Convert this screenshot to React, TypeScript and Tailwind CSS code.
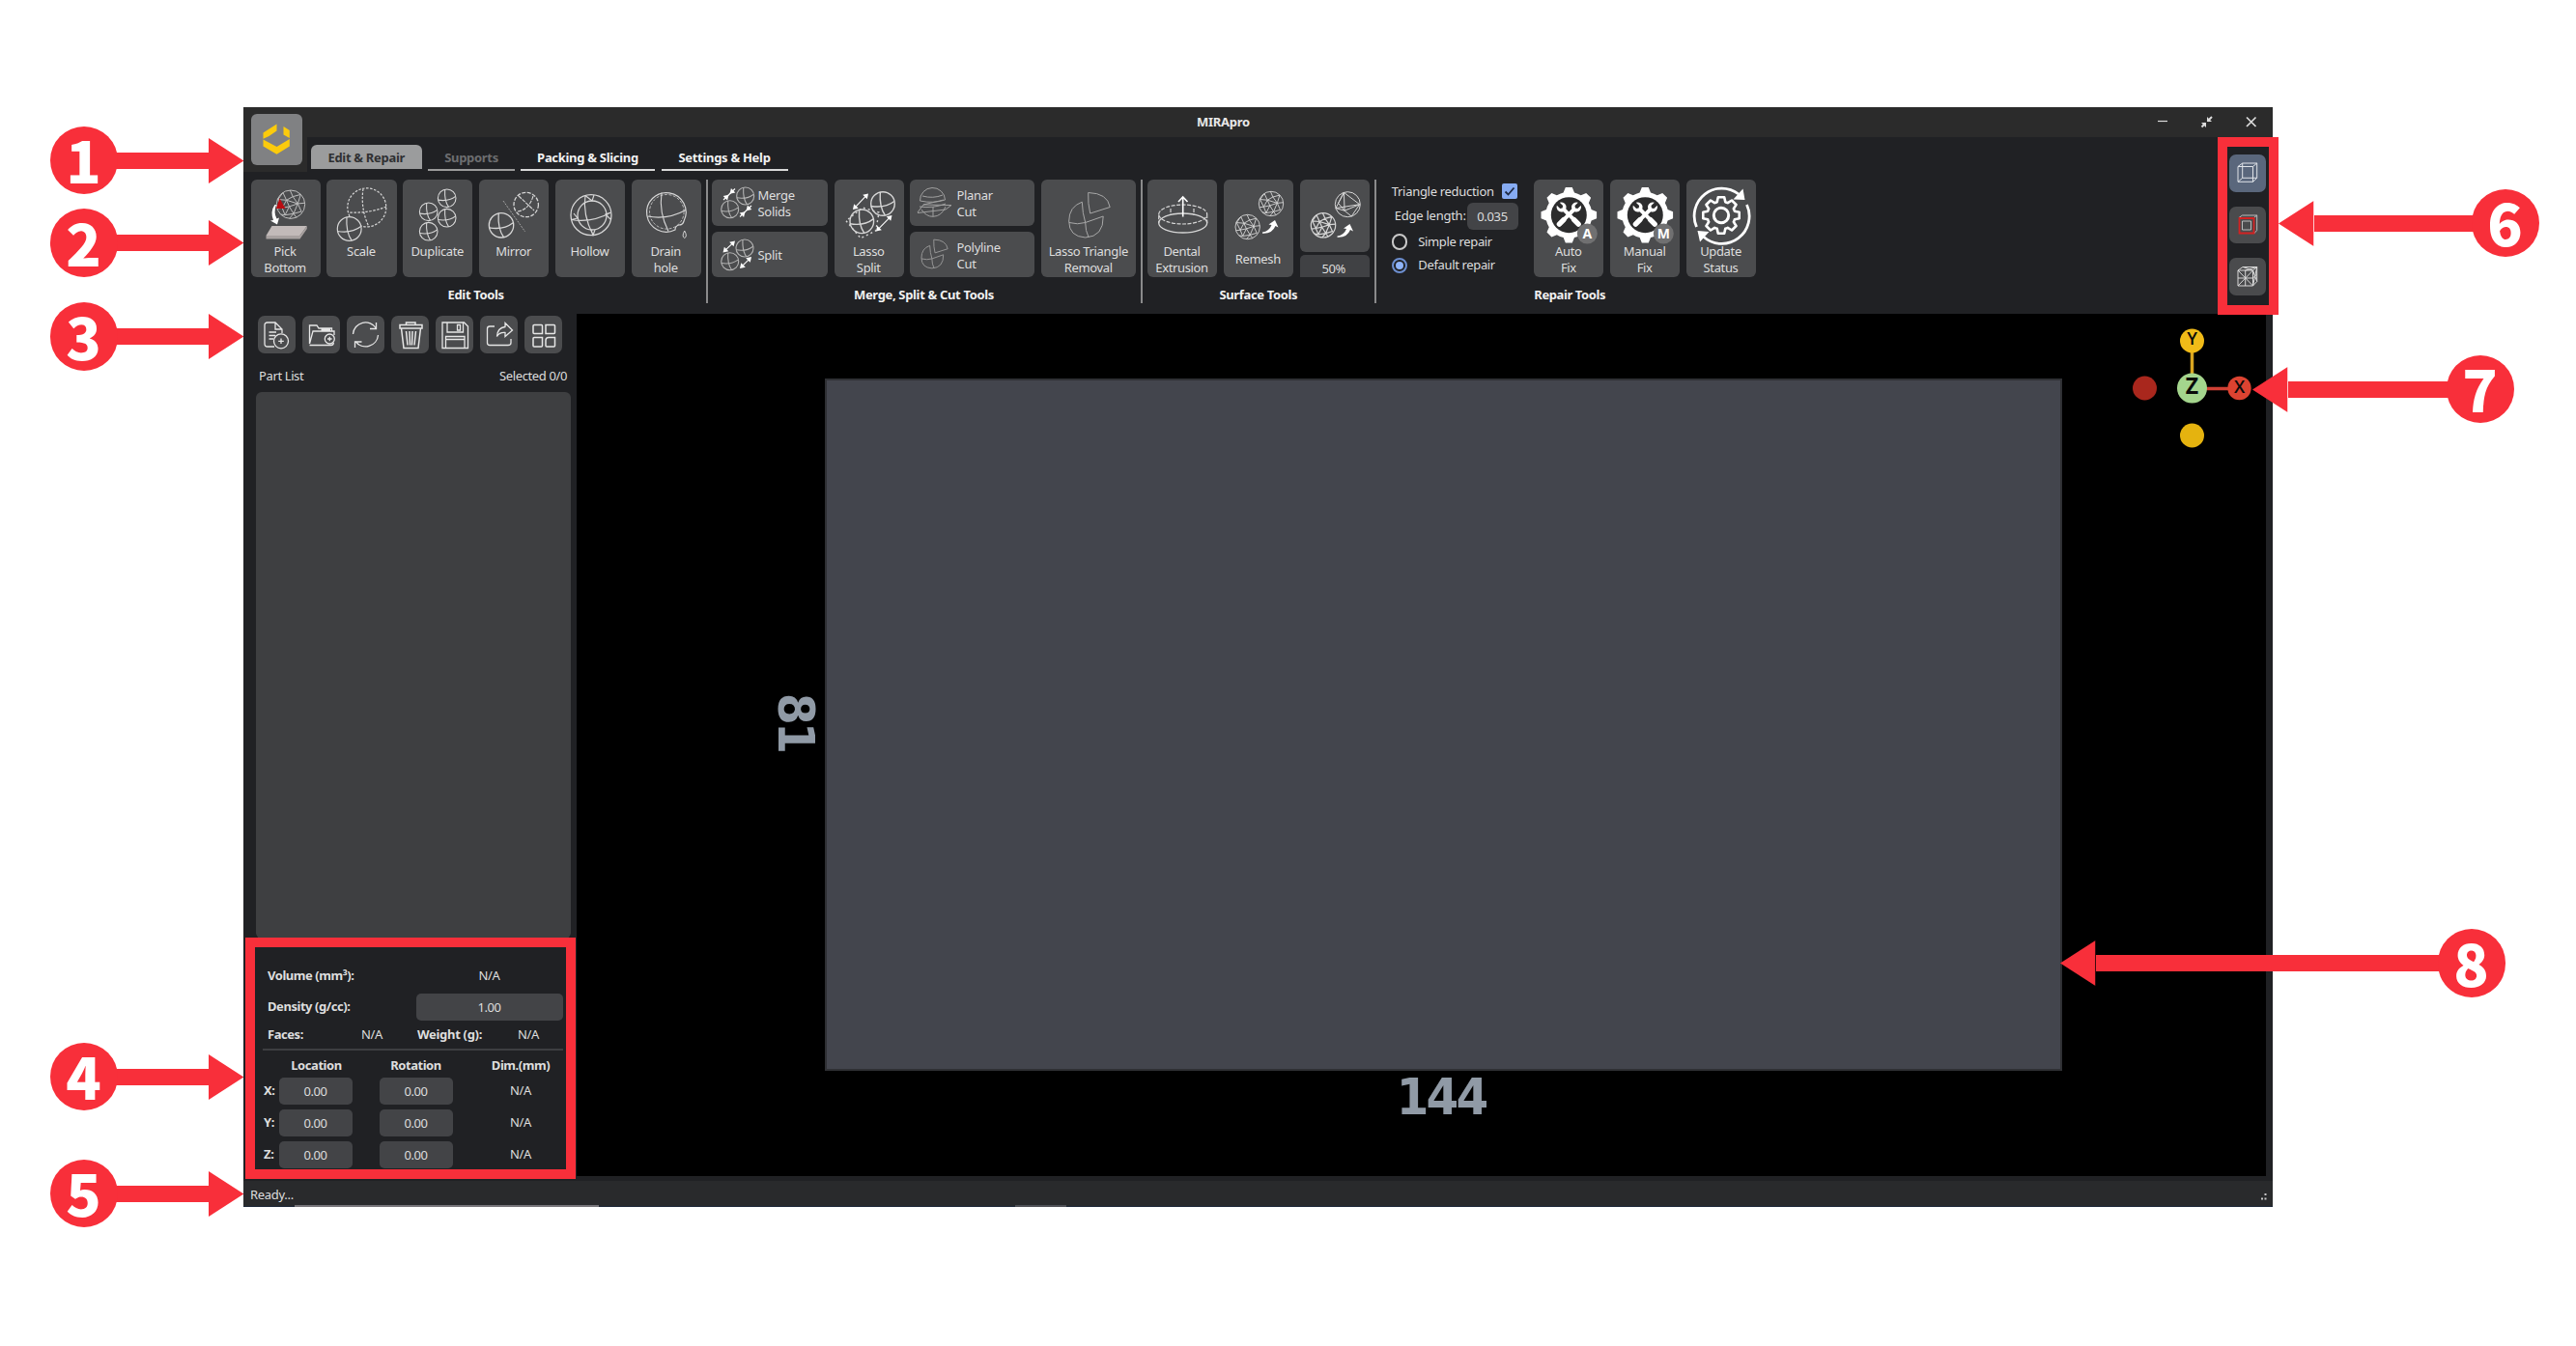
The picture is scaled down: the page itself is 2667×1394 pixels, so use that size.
import React from 'react';

const icon = 'fill-none stroke-[#d6d6d6]';

function Sphere({ x, y, r, w = 1.1 }: { x: number; y: number; r: number; w?: number }) {
  return (
    <g transform={`translate(${x} ${y}) scale(${r})`} strokeWidth={w / r}>
      <circle r="1" />
      <path d="M-1 .2Q.2 .4 .96 -.2" />
      <path d="M-.22 -.98Q-.3 .3 .2 .98" />
    </g>
  );
}

function Mesh({ x, y, r, w = 0.9, coarse = false }: { x: number; y: number; r: number; w?: number; coarse?: boolean }) {
  return (
    <g transform={`translate(${x} ${y}) scale(${r})`} strokeWidth={w / r} strokeLinejoin="round">
      <circle r="1" />
      {coarse ? (
        <path d="M-.3 -.95L-.25 .5L.95 0L-.3 -.95L-.95 .3L-.25 .5L.3 .95M-.95 .3L.95 0M.95 0L.3 .95M-.3 -.95L-.75 -.1L-.25 .5" />
      ) : (
        <path d="M-.55 -.83L-.3 -.3L.15 -.55L-.05 -1M.15 -.55L.7 -.7M.15 -.55L.5 -.05L-.1 .15L-.3 -.3L.5 -.05L1 -.1M.7 -.7L.5 -.05L.75 .5L.2 .65L-.1 .15L-.6 .25L-.3 -.3L-.9 -.35L-.6 .25L-.95 .3M-.6 .25L-.4 .75L-.1 .15M-.4 .75L.2 .65L-.1 1M.5 -.05L.2 .65L.4 .92M-.9 -.35L-.55 -.83M-.4 .75L-.7 .7" />
      )}
    </g>
  );
}

function Double({ a, b, inward = false }: { a: [number, number]; b: [number, number]; inward?: boolean }) {
  const head = (p: [number, number], q: [number, number]) => {
    const t = Math.atan2(p[1] - q[1], p[0] - q[0]);
    return <polygon points="0,0 -5,-3.2 -5,3.2" className="fill-white stroke-none" transform={`translate(${p[0]} ${p[1]}) rotate(${(t * 180) / Math.PI})`} />;
  };
  const m: [number, number] = [(a[0] + b[0]) / 2, (a[1] + b[1]) / 2];
  return (
    <g className="stroke-white" strokeWidth="1.1">
      <path d={inward ? `M${a[0]} ${a[1]}L${b[0]} ${b[1]}` : `M${a[0] * 0.85 + b[0] * 0.15} ${a[1] * 0.85 + b[1] * 0.15}L${b[0] * 0.85 + a[0] * 0.15} ${b[1] * 0.85 + a[1] * 0.15}`} />
      {inward ? head([m[0] - 0.5, m[1] + 0.5], a) : head(a, b)}
      {inward ? head([m[0] + 0.5, m[1] - 0.5], b) : head(b, a)}
    </g>
  );
}

function Swoosh({ x, y }: { x: number; y: number }) {
  return <path transform={`translate(${x} ${y})`} className="fill-white stroke-none" d="M0 11.5Q7 10.5 9.500 4L6.500 3.500L13 -1L16.500 6.500L13.500 5Q10 13.500 0 12.800Z" />;
}

function gearPath(teeth: number, ro: number, ri: number, half: number, halfTop: number) {
  let d = '';
  for (let i = 0; i < teeth; i++) {
    const c = (i / teeth) * Math.PI * 2 - Math.PI / 2;
    const pts = [[ri, c - half], [ro, c - halfTop], [ro, c + halfTop], [ri, c + half]];
    pts.forEach(([r, t], k) => {
      const px = (r * Math.cos(t)).toFixed(2);
      const py = (r * Math.sin(t)).toFixed(2);
      if (i === 0 && k === 0) d += `M${px} ${py}`;
      else if (k === 0) d += `A${ri} ${ri} 0 0 1 ${px} ${py}`;
      else d += `L${px} ${py}`;
    });
  }
  return d + `A${ri} ${ri} 0 0 1 ${(ri * Math.cos(-Math.PI / 2 - half)).toFixed(2)} ${(ri * Math.sin(-Math.PI / 2 - half)).toFixed(2)}Z`;
}

function Wrench({ rotate }: { rotate: number }) {
  return (
    <g transform={`rotate(${rotate})`}>
      <path d="M-2.200 -7L-2.200 8Q-2.200 14.500 0 15.500Q2.200 14.500 2.200 8L2.200 -7Q6 -9 5.500 -13Q5 -16 2.300 -17.300L2.300 -12L0 -10.500L-2.300 -12L-2.300 -17.300Q-5 -16 -5.500 -13Q-6 -9 -2.200 -7Z" className="fill-white stroke-none" />
    </g>
  );
}

function FixIcon({ letter }: { letter: string }) {
  return (
    <>
      <g transform="translate(36.300 36.700)" className="stroke-none">
        <path d={gearPath(8, 29, 24, 0.24, 0.12)} className="fill-white" />
        <circle r="18.500" className="fill-[#2c2c2d]" />
        <g transform="translate(0 -0.500) scale(.9)">
          <Wrench rotate={45} />
          <Wrench rotate={-45} />
          <path d="M6 6L11 11M-6 6L-11 11" className="stroke-white" strokeWidth="6" strokeLinecap="round" />
        </g>
      </g>
      <circle cx="55.300" cy="56" r="10.500" className="fill-[#707071] stroke-none" />
      <text x="55.300" y="61" textAnchor="middle" className="fill-white stroke-none font-['Open_Sans',sans-serif] text-[14px] font-bold">{letter}</text>
    </>
  );
}

const card = 'relative shrink-0 overflow-hidden rounded-[6px] bg-[#4b4c4e]';

function Tool({ lines, children, width = 'w-[72.200px]', labelTop = 'pt-[66px]' }: { lines: string[]; children: React.ReactNode; width?: string; labelTop?: string }) {
  return (
    <div className={`${card} ${width} ${labelTop} h-[101.500px]`}>
      <svg className={`${icon} absolute top-0 left-0 h-full w-full`}>{children}</svg>
      {lines.map((l) => (
        <div key={l} className="pr-px text-center text-[13px] leading-[17.500px] tracking-[-0.350px] whitespace-nowrap">{l}</div>
      ))}
    </div>
  );
}

function Wide({ lines, children, width, height }: { lines: string[]; children: React.ReactNode; width: string; height: string }) {
  return (
    <div className={`${card} ${width} ${height} flex flex-col justify-center pt-[3px] pl-[48px]`}>
      <svg className={`${icon} absolute top-0 left-0 h-full w-full`}>{children}</svg>
      {lines.map((l) => (
        <div key={l} className="text-[13px] leading-[17.500px] tracking-[-0.300px] whitespace-nowrap">{l}</div>
      ))}
    </div>
  );
}

function Group({ label, children, className = '' }: { label: string; children: React.ReactNode; className?: string }) {
  return (
    <div className={`flex shrink-0 flex-col ${className}`}>
      <div className="flex gap-[6.650px]">{children}</div>
      <div className="mt-[8px] text-center text-[13px] leading-[20px] font-bold tracking-[-0.340px] whitespace-nowrap text-[#f0f0f0]">{label}</div>
    </div>
  );
}

const Divider = ({ className = '' }: { className?: string }) => <div className={`h-[128px] w-[2px] shrink-0 bg-[#8a8a8b] ${className}`} />;

function Pie() {
  return (
    <>
      <path d="M-4.400 -19.800Q-18 -15 -18 0Q-18 16 -1 17Q18 16 17.500 -5L-1 1.500Q-4 -8 -4.400 -19.800Z" />
      <path d="M-17.800 1.500Q-9 4 -1 1.500Q-1 10 2.500 17" />
      <path d="M2 -29.500Q22 -29 24.500 -14.500L4 -8Q1.500 -18 2 -29.500Z" />
    </>
  );
}

function Ribbon() {
  return (
    <div className="flex pt-[7.500px] pl-[7.500px]">
      <Group label="Edit Tools">
        <Tool lines={['Pick', 'Bottom']}>
          <g className="stroke-[#bdbdbd]"><Mesh x={41} y={25.7} r={14.7} w={1} /></g>
          <path d="M29.500 19.500L26 30H35.500Z" className="fill-[#b90d12] stroke-none" />
          <path d="M24.500 26Q19.500 33 23 42L20 42.500L27 46.500L29 39.500L26.500 40.500Q23 34 26 26Z" className="fill-white stroke-none" />
          <path d="M21.500 48H57.800L50.500 58H15.500Z" className="fill-[#c2bab9] stroke-none" />
          <path d="M15.500 58H50.500L57.800 48V51L50.500 61.500H15.500Z" className="fill-[#a8a1a0] stroke-none" />
        </Tool>
        <Tool lines={['Scale']}>
          <path d="M24 38A20 20 0 1 1 36 48M62 28Q45 35 23 34M38 9.500Q35 30 44 49" strokeDasharray="2.500 1.500" strokeWidth="1.200" />
          <Sphere x={23.7} y={51} r={12.4} w={1.2} />
        </Tool>
        <Tool lines={['Duplicate']}>
          <Sphere x={26.7} y={33.3} r={9.3} /><Sphere x={45.7} y={19.3} r={9.3} /><Sphere x={45.7} y={39.7} r={9.3} /><Sphere x={26.7} y={53.7} r={9.3} />
        </Tool>
        <Tool lines={['Mirror']}>
          <Sphere x={23} y={47.3} r={12.7} w={1.3} />
          <circle cx="48.700" cy="26" r="12.700" strokeDasharray="4 1.500" strokeWidth="1.300" />
          <path d="M41 17L57 32M40 33Q52 31 56 17" strokeWidth="1.100" strokeDasharray="4 1" />
          <path d="M25 22L47.700 54" strokeDasharray="2 1.200" className="stroke-[#a5a5a5]" />
        </Tool>
        <Tool lines={['Hollow']}>
          <circle cx="37" cy="36.700" r="21" strokeWidth="1.300" /><circle cx="38" cy="37" r="15" strokeWidth="1.300" />
          <path d="M16.500 41.500Q38 45 57.500 34M31 16.500Q28 36 39 57.500M31 16.500L38 22L40 16M57.500 34L52 36L57 41M16.500 41.500L23 40L19 35M37 52L39 57.500L41 52" strokeWidth="1.200" />
        </Tool>
        <Tool lines={['Drain', 'hole']}>
          <path d="M45 52A20.300 20.300 0 1 1 54 43Q53 47 49 47Q45 48 45 52Z" strokeWidth="1.200" />
          <circle cx="36.300" cy="33.300" r="17.800" strokeDasharray="3 1.500" strokeWidth=".8" />
          <path d="M16.500 38Q37 42 56 31.500M31 13.500Q28 34 38 53.500" strokeWidth="1.100" />
          <path d="M54.700 53Q51.500 59 54.700 60.500Q58 59 54.700 53Z" strokeWidth="1" />
        </Tool>
      </Group>
      <Divider className="ml-[4.700px]" />
      <Group label="Merge, Split & Cut Tools" className="ml-[4px]">
        <div className="flex flex-col gap-[6.600px]">
          <Wide lines={['Merge', 'Solids']} width="w-[120.500px]" height="h-[48px]">
            <g className="stroke-[#b4b4b4]"><Sphere x={18.7} y={30.7} r={9} /><Sphere x={34.7} y={17} r={9} /></g>
            <Double a={[12, 21]} b={[24, 9.5]} inward /><Double a={[29, 38.5]} b={[41, 27]} inward />
          </Wide>
          <Wide lines={['Split']} width="w-[120.500px]" height="h-[47px]">
            <g className="stroke-[#b4b4b4]"><Sphere x={18.7} y={30.7} r={9} /><Sphere x={34} y={17} r={9} /></g>
            <Double a={[11.5, 21.5]} b={[24, 9.5]} /><Double a={[29, 38]} b={[41, 26]} />
          </Wide>
        </div>
        <Tool lines={['Lasso', 'Split']}>
          <Sphere x={28.3} y={43.3} r={12.3} w={1.4} /><Sphere x={50} y={25} r={12.3} w={1.4} />
          <path d="M12 42.700L27 60.700L42.700 53L46 34L29 29Z" strokeDasharray="2 3" strokeWidth="1.400" />
          <Double a={[19, 31]} b={[35, 14.5]} /><Double a={[43, 53.5]} b={[59.5, 37]} />
        </Tool>
        <div className="flex flex-col gap-[6.600px]">
          <Wide lines={['Planar', 'Cut']} width="w-[129px]" height="h-[48px]">
            <g className="stroke-[#a0a0a0]">
              <path d="M10.500 22A13 13 0 0 1 36.500 21Q24 25 10.500 22ZM12 31Q17 38.500 24 38.300Q33 38 37 28M10 28Q24 30 37 25M24 28V38M8 34L14 26L43 26.500L37 31L8 34.500M14 26L35 21M13 17Q24 20 34 16" strokeWidth="1" />
            </g>
          </Wide>
          <Wide lines={['Polyline', 'Cut']} width="w-[129px]" height="h-[47px]">
            <g className="stroke-[#989898]" transform="translate(23.500 27) scale(.64)" strokeWidth="1.500"><Pie /></g>
          </Wide>
        </div>
        <Tool lines={['Lasso Triangle', 'Removal']} width="w-[98.300px]">
          <g className="stroke-[#a8a8a8]" transform="translate(46.700 43)"><Pie /></g>
        </Tool>
      </Group>
      <Divider className="ml-[5px]" />
      <Group label="Surface Tools" className="ml-[4.500px]">
        <Tool lines={['Dental', 'Extrusion']}>
          <ellipse cx="36.700" cy="45" rx="25" ry="10" strokeWidth="1.300" />
          <path d="M11.700 36A25 10 0 0 1 61.700 36A25 10 0 0 1 11.700 36V45M61.700 36V45M24 30V37M48 30V37" strokeDasharray="4 1.500" strokeWidth="1.200" />
          <path d="M36.700 38.500V18M32 23L36.700 18L41.500 23" className="stroke-white" strokeWidth="1.600" />
        </Tool>
        <Tool lines={['Remesh']} labelTop="pt-[74.500px]">
          <Mesh x={24.7} y={49} r={12.7} /><Mesh x={49} y={25} r={12.7} /><Swoosh x={40} y={43} />
        </Tool>
        <div className="flex flex-col gap-[3.200px]">
          <div className={`${card} h-[75.500px] w-[72.200px]`}>
            <svg className={`${icon} h-full w-full`}><Mesh x={24} y={47.3} r={12.7} w={1.2} /><Mesh x={49.3} y={25.7} r={13} w={1} coarse /><Swoosh x={38.500} y={47} /></svg>
          </div>
          <div className="h-[22.800px] w-[72.200px] rounded-t-[5px] bg-[#404144] pr-[2px] text-center text-[13px] leading-[28px] tracking-[-0.400px]">50%</div>
        </div>
      </Group>
      <Divider className="ml-[5.500px]" />
      <div className="ml-[15.500px] flex w-[131px] shrink-0 flex-col text-[13px] tracking-[-0.250px] whitespace-nowrap">
        <div className="flex h-[24.500px] items-center justify-between">
          <span className="relative top-[1px] tracking-[-0.300px]">Triangle reduction</span>
          <span className="mr-[0.500px] flex h-[15.500px] w-[16px] items-center justify-center rounded-[2px] bg-[#86abf2]">
            <svg viewBox="0 0 16 16" className="h-4 w-4 fill-none stroke-[#1d2a44]" strokeWidth="1.800"><path d="M3.500 8.500L6.500 11.500L12.500 4.500" /></svg>
          </span>
        </div>
        <div className="flex h-[28px] items-center justify-between pl-[3px] tracking-[-0.250px]">
          <span>Edge length:</span>
          <span className="h-[28px] w-[52.500px] rounded-[6px] bg-[#434447] pr-px text-center leading-[29px] tracking-[-0.350px]">0.035</span>
        </div>
        <div className="flex h-[25px] items-center gap-[11px]">
          <span className="h-[16.500px] w-[16.500px] rounded-full border-2 border-[#c9c9c9]" />
          <span className="tracking-[-0.350px]">Simple repair</span>
        </div>
        <div className="flex h-[24px] items-center gap-[11px]">
          <span className="flex h-[16.500px] w-[16.500px] items-center justify-center rounded-full border-2 border-[#6d8fd0]"><span className="h-[8.500px] w-[8.500px] rounded-full bg-[#8fb4fa]" /></span>
          <span className="tracking-[-0.350px]">Default repair</span>
        </div>
      </div>
      <div className="ml-[16.500px] flex shrink-0 flex-col">
        <div className="flex gap-[6.650px]">
          <Tool lines={['Auto', 'Fix']}><FixIcon letter="A" /></Tool>
          <Tool lines={['Manual', 'Fix']}><FixIcon letter="M" /></Tool>
          <Tool lines={['Update', 'Status']}>
            <g transform="translate(36 37)" className="stroke-white">
              <path d={gearPath(8, 19, 14.5, 0.3, 0.17)} strokeWidth="2.600" strokeLinejoin="round" />
              <circle r="7.700" strokeWidth="3" />
              <path d="M-25.500 12A28.500 28.500 0 0 1 18 -22M26.500 -11A28.500 28.500 0 0 1 -18 22.500" strokeWidth="2.800" />
              <path d="M24.500 -16L12.500 -16.500L22.500 -27.500ZM-24.500 16L-12.500 17L-22 27.500Z" className="fill-white stroke-none" />
            </g>
          </Tool>
        </div>
        <div className="mt-[8px] w-[70px] text-center text-[13px] leading-[20px] font-bold tracking-[-0.400px] whitespace-nowrap text-[#f0f0f0]">Repair Tools</div>
      </div>
    </div>
  );
}

const fileIcons: React.ReactNode[] = [
  <g key="new"><path d="M17 32H10Q7 32 7 29V10Q7 7 10 7H18L25 14V18M18 7V14H25M11.500 17H19M11.500 20.500H18M11.500 24H16" /><circle cx="24" cy="26.300" r="7.500" /><path d="M24 23.500V29M21.200 26.300H26.800" /></g>,
  <g key="open"><path d="M7.500 29V10H15L17 13H30.500V16M7.500 29L11 16H33V20M7.500 30.500H30Q32 30.500 32.500 28M19.500 14.500H29" /><circle cx="28.300" cy="24" r="5" /><path d="M28.300 21.700V26.300M26 24H30.600" /></g>,
  <g key="sync"><path d="M6.500 19A13 13 0 0 1 30.500 13M32.500 20A13 13 0 0 1 9 26.500M24 13.500H30.500V7M15.500 27H8.500V33" /></g>,
  <g key="delete"><path d="M9 9.500H32V13H9ZM15.500 9.500V7H25V9.500M10.500 13L13 33.500H28L30.500 13M15.500 16L17 30.500M19 16L19.500 30.500M22 16L21.500 30.500M25.500 16L24 30.500" strokeWidth="1.500" /></g>,
  <g key="save"><path d="M7 7H29.500L33.500 11V33.500H7ZM12 7V17H28.500V7M22.500 9.500H25.500V15H22.500ZM10.500 33.500V21.500H30V33.500M10.500 24.500H30" /></g>,
  <g key="share"><path d="M15 11H10Q7.500 11 7.500 13.500V28Q7.500 30.500 10 30.500H29Q32 30.500 32 28V24M26 7.500L33.500 15L26 21.500V17.500Q20 17 17.500 21.500Q18 12.500 26 11.500Z" /></g>,
  <g key="arrange"><path d="M10 9.500H17.500Q18.500 9.500 18.500 10.500V18.500H10Q9 18.500 9 17.500V10.500Q9 9.500 10 9.500ZM22 9.500H30.500Q31.500 9.500 31.500 10.500V17.500Q31.500 18.500 30.500 18.500H22ZM10 22.500H18.500V31Q18.500 32 17.500 32H10Q9 32 9 31V23.500Q9 22.500 10 22.500ZM25 22.500H31.500V31Q31.500 32 30.500 32H23Q22 32 22 31V25.500Q22 22.500 25 22.500Z" strokeWidth="1.500" /></g>,
];

const Field = ({ children, className }: { children: string; className: string }) => (
  <div className={`h-[28px] rounded-[5px] bg-[#434447] pr-px text-center leading-[29px] ${className}`}>{children}</div>
);

function Properties() {
  return (
    <div className="flex w-full flex-col pt-[25px] pl-[20px] text-[13px] tracking-[-0.400px] whitespace-nowrap">
      <div className="flex h-[28px] items-center pl-[5px]">
        <b className="w-[154px] tracking-[-0.450px]">Volume (mm³):</b><span className="w-[151px] text-center">N/A</span>
      </div>
      <div className="mt-[4px] flex h-[28px] items-center pl-[5px]">
        <b className="w-[154px] tracking-[-0.450px]">Density (g/cc):</b><Field className="w-[152px]">1.00</Field>
      </div>
      <div className="mt-[3px] flex h-[24px] items-center pl-[5px]">
        <b className="w-[83px] tracking-[-0.450px]">Faces:</b><span className="w-[50px] text-center">N/A</span>
        <b className="ml-[22px] w-[90px] tracking-[-0.300px]">Weight (g):</b><span className="w-[50px] text-center">N/A</span>
      </div>
      <div className="mt-[2px] h-[2px] w-[311px] bg-[#3d3e41]" />
      <div className="flex h-[28px] items-center pt-[3px] font-bold tracking-[-0.450px]">
        <span className="ml-[17px] w-[77px] text-center">Location</span><span className="ml-[26px] w-[77px] text-center">Rotation</span><span className="ml-[21px] w-[98px] text-center">Dim.(mm)</span>
      </div>
      <div className="flex flex-col gap-[5px]">
        {['X:', 'Y:', 'Z:'].map((a) => (
          <div key={a} className="flex h-[28px] items-center">
            <b className="w-[17px] pl-[1px]">{a}</b>
            <Field className="w-[76px]">0.00</Field>
            <Field className="ml-[28px] w-[76px]">0.00</Field>
            <span className="ml-[20px] w-[100px] text-center">N/A</span>
          </div>
        ))}
      </div>
    </div>
  );
}

function Sidebar() {
  return (
    <div className="flex w-[345px] shrink-0 flex-col">
      <div className="flex gap-[6.700px] pt-[1.500px] pl-[14.700px]">
        {fileIcons.map((ic, i) => (
          <div key={i} className="h-[39.500px] w-[39.300px] rounded-[7px] bg-[#4b4c4e]">
            <svg className="h-full w-full fill-none stroke-[#e6e6e6] stroke-[1.3]">{ic}</svg>
          </div>
        ))}
      </div>
      <div className="mt-[14px] flex h-[20px] items-center justify-between pr-[10px] pl-[16px] text-[13px] tracking-[-0.380px]">
        <span>Part List</span><span>Selected 0/0</span>
      </div>
      <div className="mt-[6px] ml-[12.500px] h-[566px] w-[326.500px] rounded-[6px] bg-[#3e3f41]" />
      <Properties />
    </div>
  );
}

function Gizmo() {
  return (
    <svg viewBox="2200 330 140 140" className="absolute top-[5px] right-[6px] h-[140px] w-[140px]">
      <path d="M2269.500 365V387" stroke="#d9a520" strokeWidth="3.500" />
      <path d="M2284 402.500H2307" stroke="#cf4034" strokeWidth="3.500" />
      <circle cx="2269.500" cy="353" r="12.500" fill="#f1bb18" />
      <circle cx="2318.500" cy="402" r="12.200" fill="#dc4331" />
      <circle cx="2220.500" cy="402" r="12.500" fill="#a9271d" />
      <circle cx="2269.500" cy="451" r="12.500" fill="#e5b30f" />
      <circle cx="2269.500" cy="402" r="15.500" fill="#a4d58d" />
      <g className="font-['Open_Sans',sans-serif]" textAnchor="middle" fill="#0a0a0a">
        <text x="2269.500" y="357" fontSize="18" fontWeight="600">Y</text>
        <text x="2269.300" y="408" fontSize="23" fontWeight="700">Z</text>
        <text x="2318.500" y="407" fontSize="18" fontWeight="600">X</text>
      </g>
    </svg>
  );
}

function Viewport() {
  return (
    <div className="relative mr-[7px] mb-[5px] flex-1 bg-black">
      <div className="mt-[66.500px] ml-[257px] h-[717px] w-[1281px] border-2 border-[#2f3034] bg-[#43454d]" />
      <div className="absolute top-[780px] left-[795px] w-[200px] text-center font-['DejaVu_Sans',sans-serif] text-[51px] leading-[64px] font-bold text-[#909aa6]">
        <div className="scale-x-[0.950] tracking-[-3px]">144</div>
      </div>
      <div className="absolute top-[391px] left-[176px] w-[100px] rotate-90 text-center font-['DejaVu_Sans',sans-serif] text-[51px] leading-[64px] font-bold text-[#909aa6]">
        <div className="scale-x-[0.930] tracking-[-3px]">81</div>
      </div>
      <Gizmo />
    </div>
  );
}

function Toggles() {
  const box = 'h-[38.500px] w-[38.300px] rounded-[7px]';
  return (
    <div className="mt-[18px] mr-[7px] flex flex-col gap-[15.200px]">
      <div className={`${box} bg-[#5a677c]`}>
        <svg className="h-full w-full fill-none stroke-[#dfe3e8]"><path d="M9 12.500H24.500V28.300H9ZM13.700 9H28.700V24.300H13.700ZM9 12.500L13.700 9M24.500 12.500L28.700 9M24.500 28.300L28.700 24.300M9 28.300L13.700 24.300" /></svg>
      </div>
      <div className={`${box} bg-[#4a4b4d]`}>
        <svg className="h-full w-full fill-none stroke-[#bcbcbc]"><path d="M10 11.500L13.500 9H28.700V24.500L25.500 28M25.500 11.500L28.700 9" /><path d="M13.500 15H22.500V24H13.500Z" /><path d="M10.500 12H25.500V27.500H10.500Z" className="stroke-[#d32222]" strokeWidth="1.800" /></svg>
      </div>
      <div className={`${box} bg-[#4a4b4d]`}>
        <svg className="h-full w-full fill-none stroke-[#d8d8d8]"><path d="M9 13H24.500V29H9ZM9 13L24.500 29M24.500 13L9 29M16.700 13V29M9 21H24.500M9 13L14 9.500H28.700V24.500L24.500 29M24.500 13L28.700 9.500M24.500 21L28.700 17M24.500 13L28.700 24.500M24.500 29L28.700 9.500M16.500 13L28.700 9.500M14 9.500L24.500 13" /></svg>
      </div>
    </div>
  );
}

function Callout({ n, top, left, length, reverse = false }: { n: number; top: number; left: number; length: number; reverse?: boolean }) {
  return (
    <div className={`absolute flex items-center ${reverse ? 'flex-row-reverse' : ''}`} style={{ top, left, width: length, height: 71 }}>
      <div className="z-10 flex h-[70.500px] w-[70px] shrink-0 items-center justify-center rounded-full bg-[#f82f3a] font-['Noto_Sans_CJK_SC',sans-serif] text-[60px] leading-none font-black text-white">
        <span className="relative -top-[2px] -left-[0.500px]">{n}</span>
      </div>
      <div className={`h-[17px] flex-1 bg-[#f82f3a] ${reverse ? '-mr-1' : '-ml-1'}`} />
      <svg viewBox="0 0 36.500 47" className={`h-[47px] w-[36.500px] shrink-0 ${reverse ? 'rotate-180' : ''}`}><path d="M0 0L36.500 23.500L0 47Z" fill="#f82f3a" /></svg>
    </div>
  );
}

export default function App() {
  return (
    <div className="relative h-[1394px] w-[2667px] overflow-hidden bg-white pt-[111px] pl-[252px] font-['Noto_Sans','Open_Sans',sans-serif] text-[#dedede]">
      <div className="relative flex h-[1139px] w-[2101px] flex-col bg-[#202124]">
        <div className="flex h-[31px] shrink-0 items-center bg-[#2b2b2b]">
          <div className="w-[2029px] text-center text-[13px] font-bold tracking-[-0.250px] text-[#e8e8e8]">MIRApro</div>
          <svg viewBox="2228 0 125 31" className="absolute top-0 right-0 h-[31px] w-[125px] fill-none stroke-[#dcdcdc]">
            <path d="M2234 14.500H2244" strokeWidth="1.200" />
            <path d="M2326 10.500L2335.500 20M2335.500 10.500L2326 20" strokeWidth="1.700" />
            <path d="M2285 10V15H2290ZM2284 21V16H2279Z" className="fill-[#dcdcdc] stroke-none" />
            <path d="M2285.500 14.500L2290 10M2283.500 16.500L2279.500 20.500" strokeWidth="2" />
          </svg>
        </div>
        <div className="absolute top-0 left-0 h-[67px] w-[66px] bg-[#2b2b2b] pt-[7px] pl-[8px]">
          <div className="h-[53px] w-[52.500px] rounded-[6px] bg-[#808183]">
            <svg className="h-full w-full fill-[#fbcb0c]">
              <path d="M12.500 19.500L26.500 10.500V17.500L18.500 23L12.500 25.700ZM33.500 13L39.800 17V25L33.500 21.500ZM12.500 26.500L26.500 34L39.800 26V33.500L26.500 41.800L12.500 33.500Z" />
            </svg>
          </div>
        </div>
        <div className="flex h-[183px] shrink-0">
          <div className="flex flex-1 flex-col">
            <div className="flex h-[36px] items-end pl-[70px] text-center text-[13px] font-bold tracking-[-0.300px] whitespace-nowrap">
              <div className="mb-[3px] h-[25px] w-[114.500px] rounded-t-[6px] bg-[#9b9c9d] leading-[27px] text-[#2f3032]">Edit &amp; Repair</div>
              <div className="mb-px ml-[6.500px] h-[27px] w-[90px] border-b-2 border-[#9b9b9b] leading-[27px] text-[#6d6e70]">Supports</div>
              <div className="mb-[1.500px] ml-[6px] h-[26.500px] w-[139px] border-b-2 border-[#d8d8d8] leading-[26px] text-[#f2f2f2]">Packing &amp; Slicing</div>
              <div className="mb-[1.500px] ml-[6.500px] h-[26.500px] w-[131px] border-b-2 border-[#d8d8d8] leading-[26px] text-[#f2f2f2]">Settings &amp; Help</div>
            </div>
            <Ribbon />
          </div>
          <Toggles />
        </div>
        <div className="flex min-h-0 flex-1">
          <Sidebar />
          <Viewport />
        </div>
        <div className="relative flex h-[27px] shrink-0 items-center border-b border-[#1c2638] bg-[#292a2c] pt-[3px] pl-[7px] text-[13px] tracking-[-0.300px]">
          Ready...
          <div className="absolute -bottom-px left-[53px] h-[2px] w-[315px] bg-[#77757a]" />
          <div className="absolute -bottom-px left-[799px] h-[2px] w-[53px] bg-[#4e5056]" />
          <svg className="absolute right-[6px] bottom-[6px] h-[8px] w-[6px] fill-[#c8c8c8]"><path d="M0 5.500H2V7.500H0ZM3.500 5.500H5.500V7.500H3.500ZM3.500 1H5.500V3H3.500Z" /></svg>
        </div>
      </div>

      <div className="absolute top-[971px] left-[254px] h-[250px] w-[342px] border-[10px] border-[#f82f3a]" />
      <div className="absolute top-[142px] left-[2296px] h-[184px] w-[63px] border-[10px] border-[#f82f3a]" />
      <Callout n={1} top={130.5} left={52} length={200} />
      <Callout n={2} top={216} left={52} length={200} />
      <Callout n={3} top={313} left={52} length={200} />
      <Callout n={4} top={1079.500} left={52} length={200} />
      <Callout n={5} top={1200.500} left={52} length={200} />
      <Callout n={6} top={195.500} left={2359} length={270} reverse />
      <Callout n={7} top={367.500} left={2332} length={271} reverse />
      <Callout n={8} top={962} left={2133} length={461} reverse />
    </div>
  );
}
